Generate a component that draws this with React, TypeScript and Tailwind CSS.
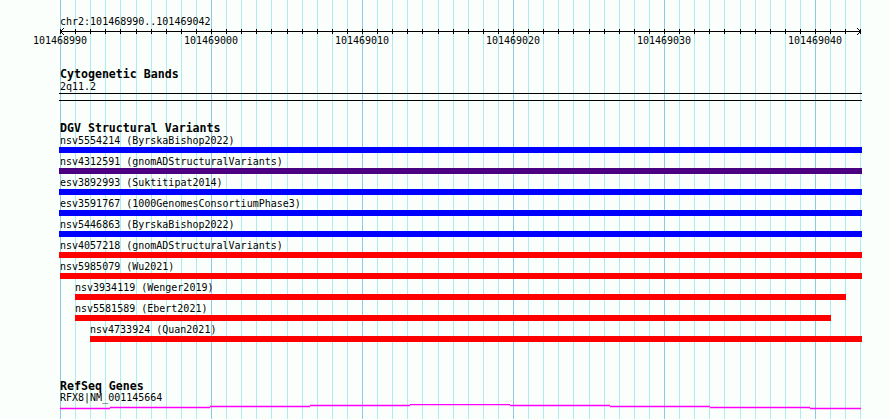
import React from "react";

// genome view: 101468990..101469042, one base ~15.1px, view starts at x=60
const X0 = 60;
const BP = 15.1;
const START = 101468990;
const TRACK_LEFT = 59;
const TRACK_RIGHT = 862;

type Variant = { label: string; color: string; from: number; to: number };

const variants: Variant[] = [
  { label: "nsv5554214 (ByrskaBishop2022)", color: "#0000ff", from: 0, to: 900 },
  { label: "nsv4312591 (gnomADStructuralVariants)", color: "#4b0082", from: 0, to: 900 },
  { label: "esv3892993 (Suktitipat2014)", color: "#0000ff", from: 0, to: 900 },
  { label: "esv3591767 (1000GenomesConsortiumPhase3)", color: "#0000ff", from: 0, to: 900 },
  { label: "nsv5446863 (ByrskaBishop2022)", color: "#0000ff", from: 0, to: 900 },
  { label: "nsv4057218 (gnomADStructuralVariants)", color: "#ff0000", from: 0, to: 900 },
  { label: "nsv5985079 (Wu2021)", color: "#ff0000", from: 60, to: 900 },
  { label: "nsv3934119 (Wenger2019)", color: "#ff0000", from: 75, to: 846 },
  { label: "nsv5581589 (Ebert2021)", color: "#ff0000", from: 75, to: 831 },
  { label: "nsv4733924 (Quan2021)", color: "#ff0000", from: 90, to: 900 },
];

const ticks = Array.from({ length: 54 }, (_, i) => i);

function GridLines() {
  return (
    <svg className="absolute inset-0 pointer-events-none" width={890} height={419}>
      {ticks.map((i) => {
        const x = Math.round(X0 + i * BP) + 0.5;
        return (
          <line
            key={i}
            x1={x}
            x2={x}
            y1={0}
            y2={419}
            stroke={i % 10 === 0 ? "#8ec9e6" : "#aeecef"}
            strokeWidth={1}
          />
        );
      })}
    </svg>
  );
}

function Ruler() {
  return (
    <svg width={890} height={46} className="block">
      <text x={60} y={25} fontSize={10} fill="#000" fontFamily="DejaVu Sans Mono, monospace">
        chr2:101468990..101469042
      </text>
      <line x1={60} x2={861} y1={31.5} y2={31.5} stroke="#000" />
      {ticks.map((i) => {
        const x = Math.round(X0 + i * BP) + 0.5;
        return <line key={i} x1={x} x2={x} y1={29} y2={34} stroke="#000" />;
      })}
      <polyline points="64,28 60.5,31.5 64,35" fill="none" stroke="#000" />
      <polyline points="857,28 860.5,31.5 857,35" fill="none" stroke="#000" />
      {[0, 10, 20, 30, 40, 50].map((i) => (
        <text
          key={i}
          x={X0 + i * BP}
          y={43.5}
          fontSize={10}
          textAnchor="middle"
          fill="#000"
          fontFamily="DejaVu Sans Mono, monospace"
        >
          {START + i}
        </text>
      ))}
    </svg>
  );
}

function VariantRow({ v }: { v: Variant }) {
  const barLeft = Math.max(v.from, TRACK_LEFT);
  const barRight = Math.min(v.to, TRACK_RIGHT);
  const labelLeft = Math.max(v.from, X0);
  return (
    <div className="flex flex-col mb-[2px]">
      <div
        className="text-[10px] leading-[13px] whitespace-nowrap text-black"
        style={{ paddingLeft: labelLeft - TRACK_LEFT }}
      >
        {v.label}
      </div>
      <div
        className="h-[6px]"
        style={{ marginLeft: barLeft - TRACK_LEFT, width: barRight - barLeft, background: v.color }}
      />
    </div>
  );
}

function GeneLine() {
  const steps = [
    [60, 110, 4],
    [110, 210, 3],
    [210, 310, 2],
    [310, 410, 1],
    [410, 510, 0],
    [510, 610, 1],
    [610, 710, 2],
    [710, 810, 3],
    [810, 861, 4],
  ];
  return (
    <svg width={803} height={6} className="block">
      {steps.map(([a, b, y], i) => (
        <line
          key={i}
          x1={a - TRACK_LEFT}
          x2={b - TRACK_LEFT}
          y1={y + 0.5}
          y2={y + 0.5}
          stroke="#ff00ff"
          strokeWidth={1.4}
        />
      ))}
    </svg>
  );
}

export default function App() {
  return (
    <div className="relative w-[890px] h-[419px] overflow-hidden bg-[#fbfffb] font-['DejaVu_Sans_Mono',monospace] text-black">
      <GridLines />
      <div className="relative flex flex-col">
        <Ruler />
        <div className="ml-[59px] w-[803px] flex flex-col mt-[22px]">
          {/* cytogenetic bands */}
          <div className="pl-[1px] text-[11.6px] leading-[12px] font-bold">Cytogenetic Bands</div>
          <div className="mt-[1px] pl-[1px] text-[10px] leading-[12px]">2q11.2</div>
          <div className="h-[8px] border-y border-black" />

          {/* DGV */}
          <div className="mt-[21px] pl-[1px] text-[11.6px] leading-[12px] font-bold">
            DGV Structural Variants
          </div>
          <div className="flex flex-col">
            {variants.map((v) => (
              <VariantRow key={v.label} v={v} />
            ))}
          </div>

          {/* RefSeq */}
          <div className="mt-[36px] pl-[1px] text-[11.6px] leading-[12px] font-bold">RefSeq Genes</div>
          <div className="pl-[1px] text-[10px] leading-[12px]">RFX8|NM_001145664</div>
          <GeneLine />
        </div>
      </div>
    </div>
  );
}
